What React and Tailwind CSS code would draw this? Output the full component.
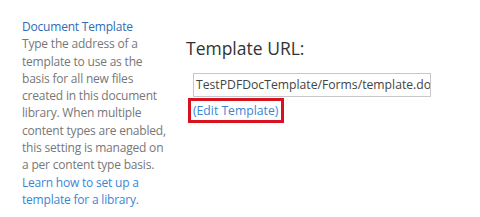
import React from "react";

const App = () => {
  return (
    <div
      className="flex w-[480px] h-[217px] bg-white overflow-hidden"
      style={{ fontFamily: '"Open Sans", "Noto Sans", sans-serif' }}
    >
      {/* Left description column */}
      <div className="w-[164px] shrink-0 pl-[22px] pt-[18px] text-[12px] leading-[17.3px] tracking-[-0.2px] whitespace-nowrap">
        <div className="text-[#2e6cb4]">Document Template</div>
        <p className="text-[#777777]">
          Type the address of a
          <br />
          template to use as the
          <br />
          basis for all new files
          <br />
          created in this document
          <br />
          library. When multiple
          <br />
          content types are enabled,
          <br />
          this setting is managed on
          <br />
          a per content type basis.
          <br />
          <a className="text-[#3a86d6]">
            Learn how to set up a
            <br />
            template for a library.
          </a>
        </p>
      </div>

      {/* Right input column */}
      <div className="flex-1 pl-[22px] pt-[36px]">
        <div className="text-[17.5px] leading-[24px] text-[#333333]">
          Template URL:
        </div>
        <div className="mt-[13px] pl-[7px]">
          <div className="w-[238px] h-[24px] border border-[#c8c8c8] px-[2px] text-[12.2px] leading-[22px] text-[#444444] whitespace-nowrap overflow-hidden">
            TestPDFDocTemplate/Forms/template.docx
          </div>
          <div className="-ml-[5px] mt-[-1px] inline-block border-[3px] border-[#d9121f] pl-[2px] pr-[3px] text-[12.2px] leading-[19px] text-[#3a86d6]">
            (Edit Template)
          </div>
        </div>
      </div>
    </div>
  );
};

export default App;
